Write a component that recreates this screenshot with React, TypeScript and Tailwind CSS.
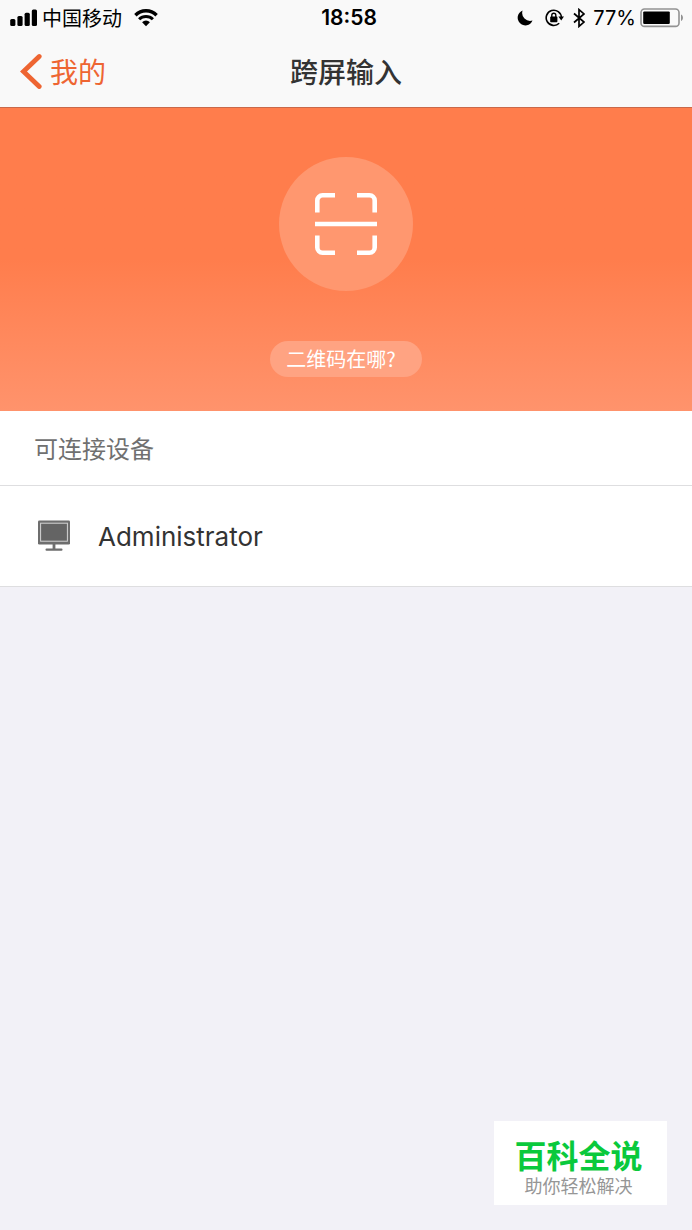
import React from "react";

const SignalIcon = () => (
  <svg width="28" height="18" viewBox="0 0 28 18" fill="black" aria-hidden="true">
    <rect x="0.2" y="10" width="5.2" height="7" rx="1.5" />
    <rect x="7.4" y="7" width="5.2" height="10" rx="1.5" />
    <rect x="14.6" y="3.8" width="5.2" height="13.2" rx="1.5" />
    <rect x="21.8" y="0.5" width="5.2" height="16.5" rx="1.5" />
  </svg>
);

const WifiIcon = () => (
  <svg width="24" height="18" viewBox="0 0 24 18" fill="none" aria-hidden="true">
    <path d="M1.4 6.2a15 15 0 0 1 21.2 0" stroke="black" strokeWidth="3.4" />
    <path d="M5.1 10.3a9.8 9.8 0 0 1 13.8 0" stroke="black" strokeWidth="3" />
    <path d="M12 17.2l-3.9-4a5.6 5.6 0 0 1 7.8 0z" fill="black" />
  </svg>
);

const MoonIcon = () => (
  <svg width="16" height="16" viewBox="0 0 16 16" fill="black" aria-hidden="true">
    <path d="M5.6 0.5A7.7 7.7 0 1 0 15.5 10.6A8 8 0 0 1 5.6 0.5z" />
  </svg>
);

const RotationLockIcon = () => (
  <svg width="20" height="18" viewBox="0 0 20 18" fill="none" aria-hidden="true">
    <path d="M14.2 14.2A7.6 7.6 0 1 1 16.4 8.5" stroke="black" strokeWidth="1.6" />
    <path d="M13.4 7.6h5.6l-2.8 3.8z" fill="black" />
    <rect x="5.2" y="7.6" width="7.2" height="5.6" rx="0.8" fill="black" />
    <path d="M6.8 8V6.2a2 2 0 0 1 4 0V8" stroke="black" strokeWidth="1.4" />
  </svg>
);

const BluetoothIcon = () => (
  <svg width="12" height="20" viewBox="0 0 12 20" fill="none" aria-hidden="true">
    <path d="M1 5.5l10 8.6L6 18.4V1.6l5 4.3L1 14.5" stroke="black" strokeWidth="1.7" />
  </svg>
);

const BatteryIcon = () => (
  <svg width="44" height="20" viewBox="0 0 44 20" fill="none" aria-hidden="true">
    <rect x="1" y="1" width="38" height="17.4" rx="3.5" stroke="#929292" strokeWidth="1.6" />
    <rect x="3.2" y="3.4" width="26.6" height="12.6" rx="1.2" fill="black" />
    <path d="M41 6.5c2.6 0.8 2.6 5.6 0 6.4z" fill="#929292" />
  </svg>
);

const ScanIcon = () => (
  <svg width="64" height="64" viewBox="0 0 64 64" fill="none" stroke="white" strokeWidth="4.6" aria-hidden="true">
    <path d="M3.3 20.5V8.5a5.2 5.2 0 0 1 5.2-5.2h12.5" />
    <path d="M43 3.3h12.5a5.2 5.2 0 0 1 5.2 5.2v12" />
    <path d="M3.3 43.5v12a5.2 5.2 0 0 0 5.2 5.2h12.5" />
    <path d="M43 60.7h12.5a5.2 5.2 0 0 0 5.2-5.2v-12" />
    <path d="M1 32h62" />
  </svg>
);

const MonitorIcon = () => (
  <svg width="32" height="32" viewBox="0 0 32 32" aria-hidden="true">
    <rect x="0" y="0.5" width="32" height="24" rx="1.2" fill="#6e6e6e" />
    <rect x="2.6" y="3.2" width="26.8" height="18" fill="#646464" stroke="#d4d4d4" strokeWidth="1" />
    <rect x="14.6" y="24" width="2.8" height="5" fill="#6e6e6e" />
    <rect x="7.5" y="28.6" width="17" height="2.2" rx="1" fill="#6e6e6e" />
  </svg>
);

export default function App() {
  return (
    <div className="relative min-h-screen bg-[#f2f1f7] font-['Noto_Sans_CJK_SC',sans-serif]">
      <header className="border-b border-[#c9694a] bg-[#f9f9f9]">
        {/* Status bar */}
        <div className="grid grid-cols-[1fr_auto_1fr] items-center pt-1 pr-2 pl-[10px] text-xl leading-7 text-black">
          <div className="flex items-center">
            <SignalIcon />
            <span className="mr-3 ml-1">中国移动</span>
            <WifiIcon />
          </div>
          <span className="pl-1 font-[Inter,sans-serif] text-[21px] font-semibold">18:58</span>
          <div className="flex items-center justify-end font-[Inter,sans-serif]">
            <MoonIcon />
            <span className="ml-3">
              <RotationLockIcon />
            </span>
            <span className="mr-2 ml-2">
              <BluetoothIcon />
            </span>
            <span className="mr-1">77%</span>
            <BatteryIcon />
          </div>
        </div>

        {/* Navigation bar */}
        <nav className="grid h-[75px] grid-cols-[1fr_auto_1fr] items-center px-5 pt-0.5 text-[28px] leading-9">
          <a href="#mine" className="flex items-center gap-2 text-[#ee6532]">
            <svg width="22" height="36" viewBox="0 0 22 36" fill="none" aria-hidden="true">
              <path d="M19.2 3.5L3.5 18.5l15.7 15" stroke="currentColor" strokeWidth="4.8" strokeLinecap="round" />
            </svg>
            我的
          </a>
          <h1 className="font-medium text-[#333333]">跨屏输入</h1>
        </nav>
      </header>

      <main>
        <section className="flex flex-col items-center bg-linear-to-b from-[#ff7d4c] from-50% to-[#ff936c] pt-[49px] pb-[34px]">
          <button
            type="button"
            aria-label="扫一扫"
            className="flex size-[134px] items-center justify-center rounded-full bg-[#ff976f]"
          >
            <ScanIcon />
          </button>
          <button type="button" className="mt-[50px] h-9 rounded-full bg-[#ffa382] pr-[26px] pl-4 text-xl text-white">
            二维码在哪?
          </button>
        </section>

        <section className="bg-white">
          <h2 className="border-b border-[#dedee0] px-[34px] py-5 text-2xl leading-[34px] text-[#707070]">
            可连接设备
          </h2>
          <ul>
            <li className="border-b border-[#dedee0]">
              <button
                type="button"
                className="flex h-[100px] w-full items-center gap-7 px-[38px] text-left font-[Inter,sans-serif] text-[26px] text-[#333333]"
              >
                <MonitorIcon />
                Administrator
              </button>
            </li>
          </ul>
        </section>
      </main>

      {/* Site badge */}
      <aside className="absolute right-[25px] bottom-[25px] flex h-[84px] w-[173px] flex-col items-center justify-center bg-white pt-3 pr-1 font-[Inter,'Noto_Sans_CJK_SC',sans-serif]">
        <strong className="text-[32px] leading-9 font-bold text-[#0ac93c]">百科全说</strong>
        <span className="text-lg leading-6 text-[#969696]">助你轻松解决</span>
      </aside>
    </div>
  );
}
